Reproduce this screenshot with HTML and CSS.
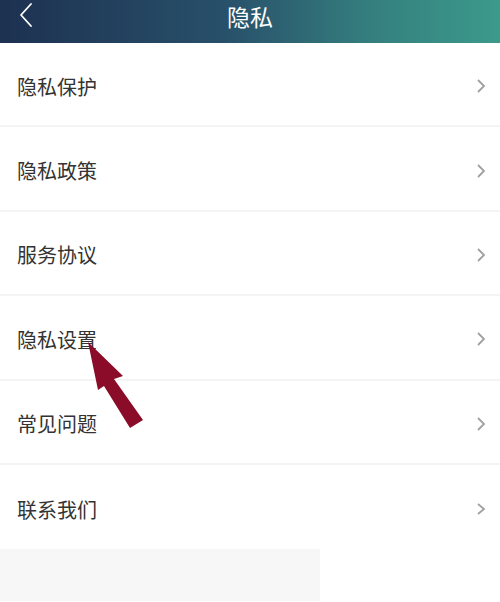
FILE: index.html
```html
<!DOCTYPE html>
<html lang="zh">
<head>
<meta charset="utf-8">
<link rel="stylesheet" href="styles.css">
</head>
<body>
<div class="page">
  <header class="topbar">
    <svg class="back" width="16" height="26" viewBox="0 0 16 26"><path d="M13 2 L3 13 L13 24" fill="none" stroke="#fff" stroke-width="1.8" stroke-linecap="round" stroke-linejoin="round"/></svg>
    <h1 class="title">隐私</h1>
  </header>
  <ul class="list">
    <li class="row"><span>隐私保护</span><svg class="chev" width="10" height="16" viewBox="0 0 10 16"><path d="M2 2 L8 8 L2 14" fill="none" stroke="#a0a0a0" stroke-width="1.8"/></svg></li>
    <li class="row"><span>隐私政策</span><svg class="chev" width="10" height="16" viewBox="0 0 10 16"><path d="M2 2 L8 8 L2 14" fill="none" stroke="#a0a0a0" stroke-width="1.8"/></svg></li>
    <li class="row"><span>服务协议</span><svg class="chev" width="10" height="16" viewBox="0 0 10 16"><path d="M2 2 L8 8 L2 14" fill="none" stroke="#a0a0a0" stroke-width="1.8"/></svg></li>
    <li class="row"><span>隐私设置</span><svg class="chev" width="10" height="16" viewBox="0 0 10 16"><path d="M2 2 L8 8 L2 14" fill="none" stroke="#a0a0a0" stroke-width="1.8"/></svg></li>
    <li class="row"><span>常见问题</span><svg class="chev" width="10" height="16" viewBox="0 0 10 16"><path d="M2 2 L8 8 L2 14" fill="none" stroke="#a0a0a0" stroke-width="1.8"/></svg></li>
    <li class="row last"><span>联系我们</span><svg class="chev" width="10" height="16" viewBox="0 0 10 16"><path d="M2 3 L8 8 L2 13" fill="none" stroke="#a0a0a0" stroke-width="1.8"/></svg></li>
  </ul>
  <div class="bottom">
    <div class="graybox"></div>
  </div>
  <svg class="arrow" width="500" height="602" viewBox="0 0 500 602">
    <polygon points="88,342 123,376 114,379 143,420 130,428 104,386 98,390" fill="#8a0c28"/>
  </svg>
</div>
</body>
</html>
```
FILE: styles.css
```css
* { box-sizing: border-box; }
html, body { margin: 0; padding: 0; background: #fff; }
body { font-family: "Noto Sans CJK SC", "Noto Sans", sans-serif; }
.page { position: relative; width: 500px; height: 602px; overflow: hidden; }
.topbar {
  height: 43px;
  background: linear-gradient(90deg, #1d3151 0%, #28506a 45%, #35807f 75%, #3c9a8b 100%);
  display: flex; align-items: center; justify-content: center;
  position: relative;
}
.back { position: absolute; left: 18px; top: 2px; }
.title { margin: 0; color: #fff; font-size: 23px; font-weight: 400; line-height: 1; position: relative; top: -5px; }
.list { list-style: none; margin: 0; padding: 0; }
.row {
  height: 84.4px;
  display: flex; align-items: center; justify-content: space-between;
  padding: 0 14px 0 17px;
  border-bottom: 2px solid #f4f4f4;
  font-size: 20px; color: #333;
}
.row span { position: relative; top: 2px; }
.chev { position: relative; top: 2px; }
.row.last { border-bottom: none; }
.bottom { height: 60px; display: flex; }
.graybox { width: 320px; height: 52px; background: #f7f7f7; }
.arrow { position: absolute; left: 0; top: 0; pointer-events: none; }
```
